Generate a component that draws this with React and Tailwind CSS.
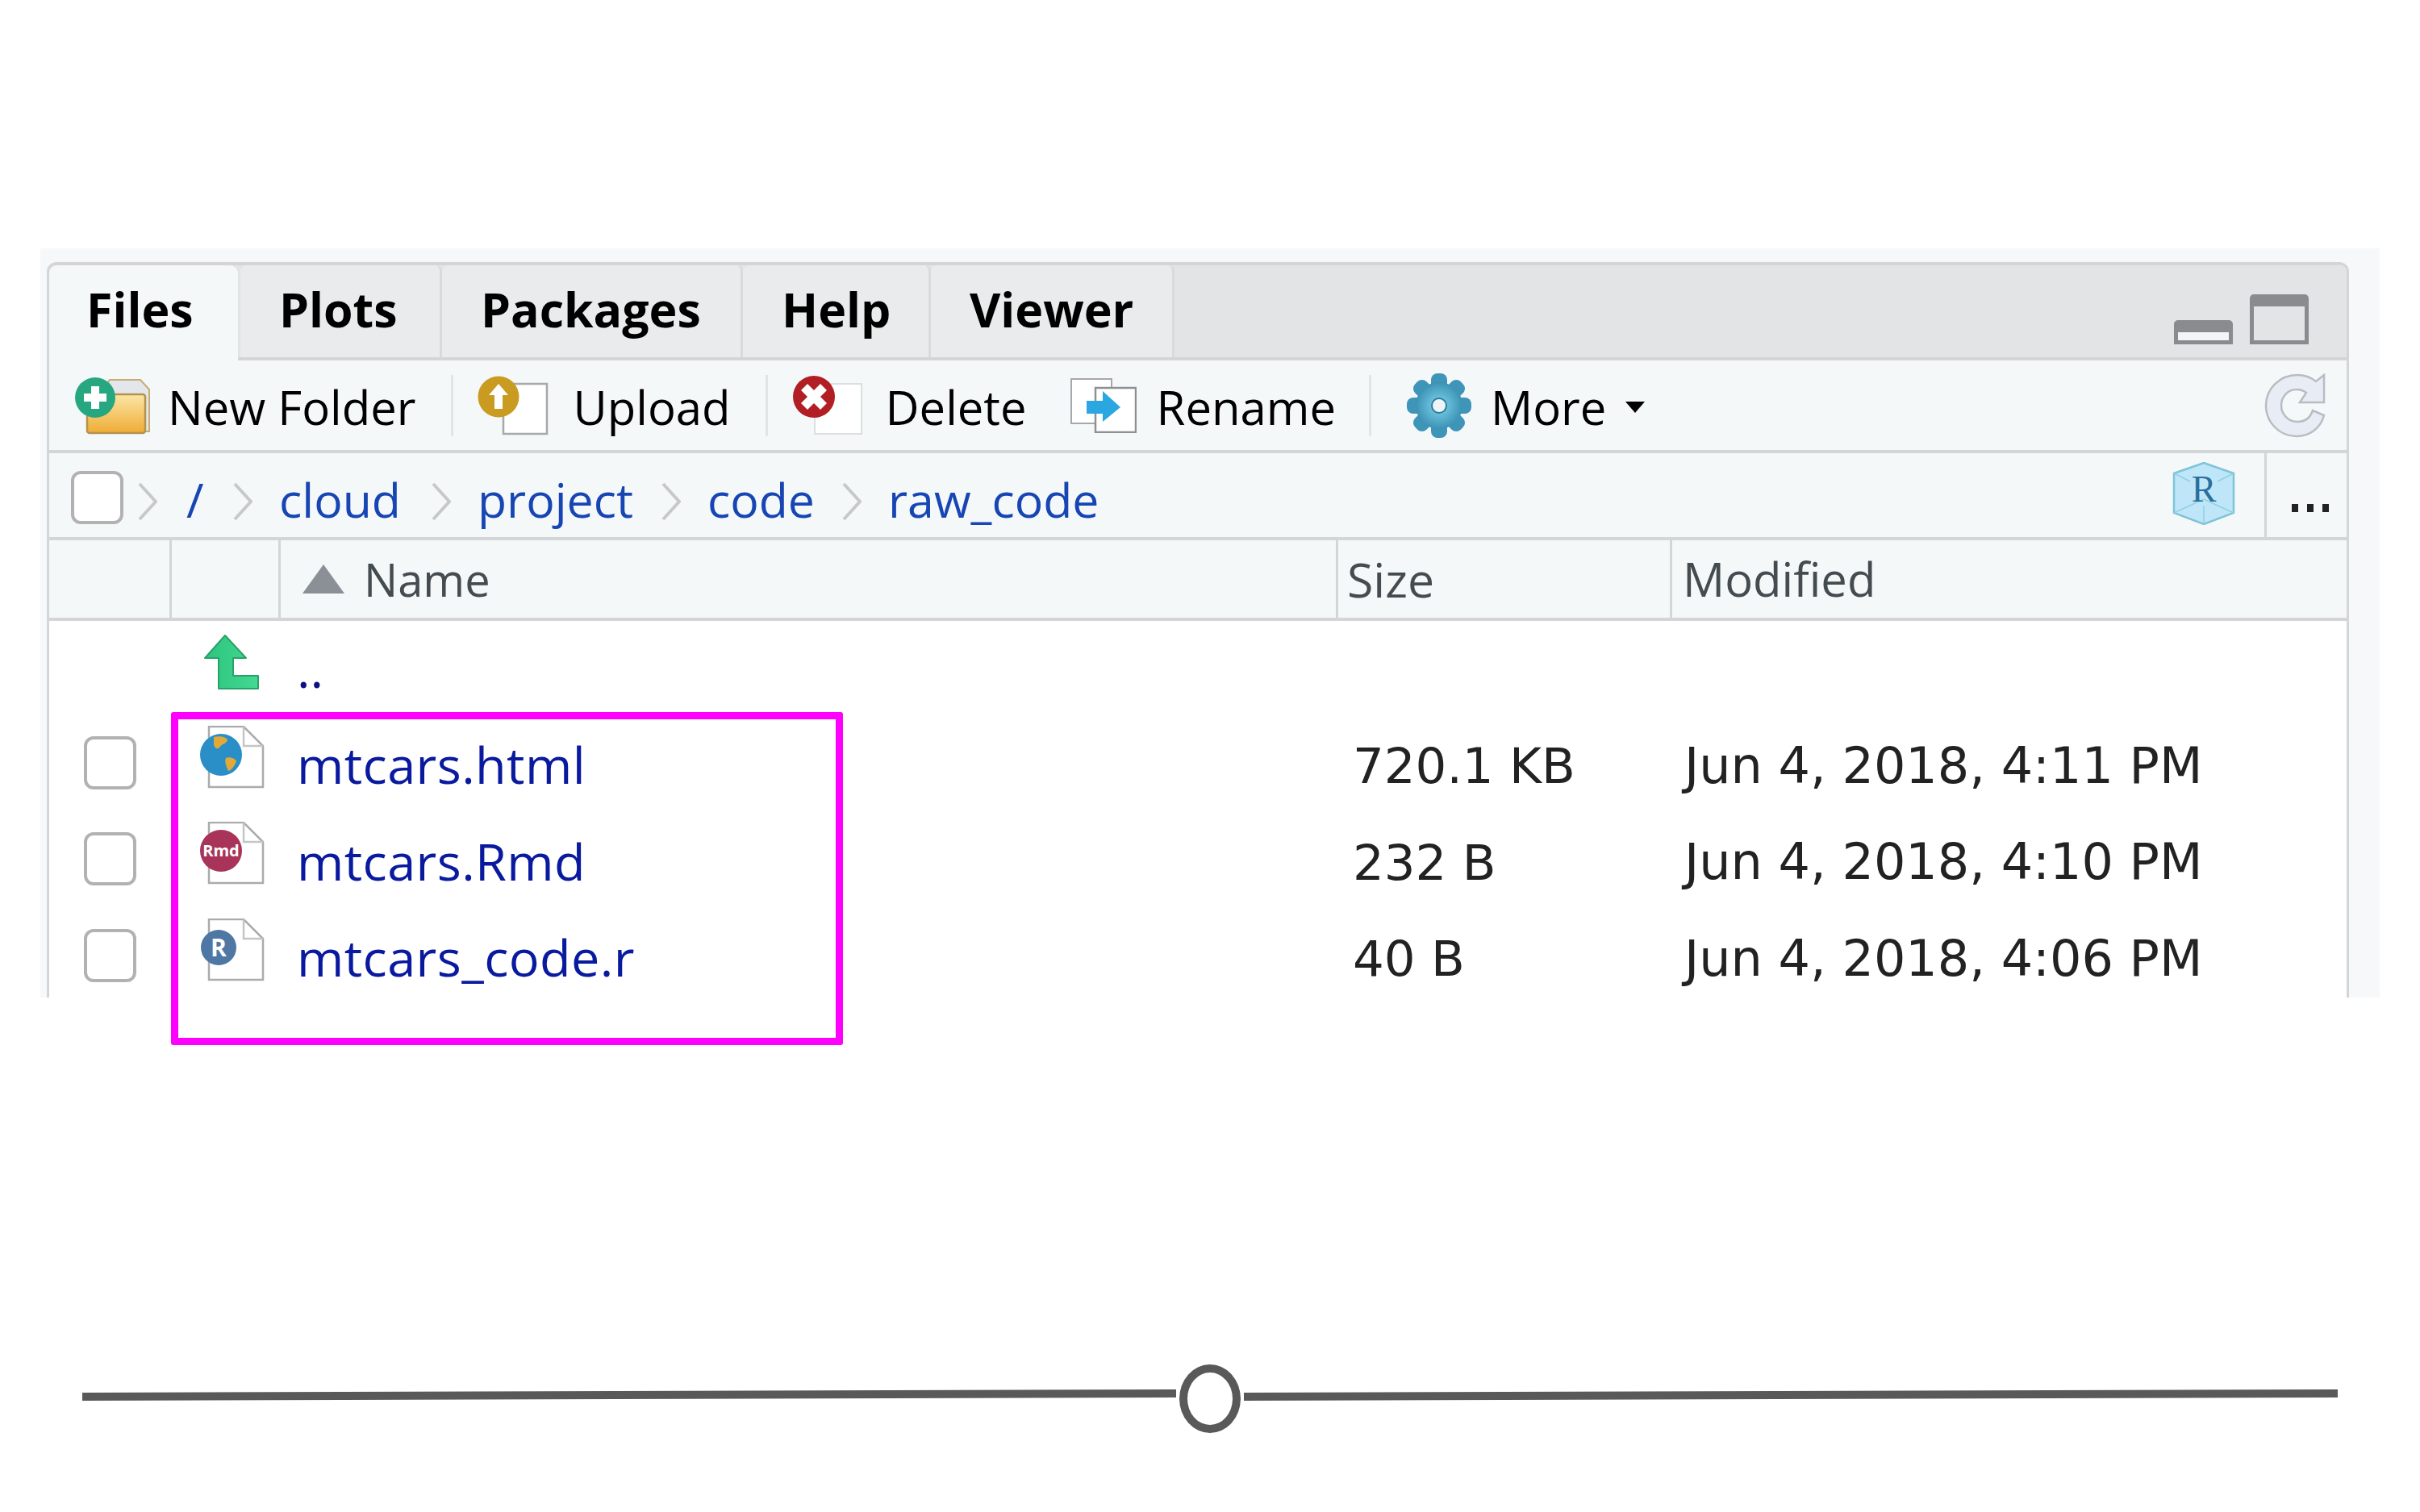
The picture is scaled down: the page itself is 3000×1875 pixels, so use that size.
import React from 'react';

const font = { fontFamily: '"Open Sans", "Liberation Sans", sans-serif' };
const dejavu = { fontFamily: '"DejaVu Sans", sans-serif' };

function NewFolderIcon() {
  return (
    <svg width="100" height="76" viewBox="0 0 100 76" className="shrink-0">
      <defs>
        <linearGradient id="folderFill" x1="0" y1="0" x2="0" y2="1">
          <stop offset="0" stopColor="#fbe6a6" />
          <stop offset="1" stopColor="#efac35" />
        </linearGradient>
      </defs>
      <path d="M30 24 L44 6 H82 L93 18 V70 H86 V24 Z" fill="#e3e7ec" stroke="#c8ab72" strokeWidth="2" />
      <rect x="16" y="24" width="72" height="48" rx="3" fill="url(#folderFill)" stroke="#b4924e" strokeWidth="2.5" />
      <circle cx="26" cy="28" r="25" fill="#27a77f" />
      <path d="M21 14 H31 V23 H40 V33 H31 V42 H21 V33 H12 V23 H21 Z" fill="#fff" />
    </svg>
  );
}

function UploadIcon() {
  return (
    <svg width="88" height="76" viewBox="0 0 88 76" className="shrink-0">
      <rect x="32" y="11" width="54" height="62" fill="#fff" stroke="#a6a9ab" strokeWidth="2.5" />
      <circle cx="26" cy="27" r="25.5" fill="#c99b20" />
      <path d="M26 11 L38 25 H31 V42 H21 V25 H14 Z" fill="#fff" />
    </svg>
  );
}

function DeleteIcon() {
  return (
    <svg width="88" height="76" viewBox="0 0 88 76" className="shrink-0">
      <rect x="27" y="11" width="58" height="62" fill="#fff" stroke="#dcdedf" strokeWidth="2" />
      <circle cx="26" cy="27" r="26" fill="#b11f24" />
      <path d="M18 11 L26 19 L34 11 L42 19 L34 27 L42 35 L34 43 L26 35 L18 43 L10 35 L18 27 L10 19 Z" fill="#fff" />
    </svg>
  );
}

function RenameIcon() {
  return (
    <svg width="82" height="68" viewBox="0 0 82 68" className="shrink-0">
      <rect x="1" y="1" width="50" height="55" fill="#fff" stroke="#a6a9ab" strokeWidth="2" />
      <rect x="31" y="12" width="50" height="55" fill="#fff" stroke="#8d9194" strokeWidth="2.5" />
      <path d="M20 28 H40 V16 L62 36 L40 54 V44 H20 Z" fill="#2aa7e0" />
    </svg>
  );
}

function GearIcon() {
  const teeth = [0, 45, 90, 135, 180, 225, 270, 315];
  return (
    <svg width="82" height="82" viewBox="0 0 82 82" className="shrink-0">
      <defs>
        <radialGradient id="gearFill">
          <stop offset="0" stopColor="#7fd6ee" />
          <stop offset="1" stopColor="#3c92b4" />
        </radialGradient>
      </defs>
      <g fill="url(#gearFill)">
        {teeth.map((a) => (
          <rect key={a} x="31" y="1" width="20" height="24" rx="8" fill="#3f95b8" transform={`rotate(${a} 41 41)`} />
        ))}
        <circle cx="41" cy="41" r="29" />
      </g>
      <circle cx="41" cy="41" r="9" fill="#eef5f7" stroke="#2f7d9d" strokeWidth="2" />
    </svg>
  );
}

function RefreshIcon() {
  return (
    <svg width="76" height="80" viewBox="0 0 76 80" className="shrink-0">
      <path
        d="M41 2 C50 2 58 5 64 10 L74 2 V36 H44 L52 24 C48 21 44 20 40 20 C29 20 21 29 21 40 C21 51 30 60 41 60 C50 60 57 55 60 46 L74 52 C70 68 56 78 40 78 C18 78 2 60 2 40 C2 19 19 2 41 2 Z"
        fill="#e8edf5"
        stroke="#b9bdc3"
        strokeWidth="2.5"
      />
    </svg>
  );
}

function CubeIcon() {
  return (
    <svg width="78" height="78" viewBox="0 0 78 78" className="shrink-0">
      <path d="M39 1 L76 14 V63 L39 77 L2 63 V14 Z" fill="#bfe6f8" stroke="#7ec4d8" strokeWidth="2.5" />
      <path d="M2 14 L22 24 M76 14 L56 24 M39 77 V54 M2 63 L39 46 L76 63" fill="none" stroke="#8fd0e2" strokeWidth="1.5" />
      <text x="39" y="49" textAnchor="middle" fontSize="46" fill="#2a6f9c" style={{ fontFamily: '"Liberation Serif", serif' }}>R</text>
    </svg>
  );
}

function UpArrowIcon() {
  return (
    <svg width="70" height="70" viewBox="0 0 70 70">
      <defs>
        <linearGradient id="arrowFill" x1="0" y1="0" x2="1" y2="0">
          <stop offset="0" stopColor="#2cc47e" />
          <stop offset="1" stopColor="#45d992" />
        </linearGradient>
      </defs>
      <path d="M27 2 L53 30 H37 V52 H68 V68 H19 V30 H2 Z" fill="url(#arrowFill)" stroke="#27a368" strokeWidth="2" strokeLinejoin="round" />
    </svg>
  );
}

function CrumbChevron() {
  return (
    <svg width="24" height="48" viewBox="0 0 24 48" className="shrink-0 mt-[15px]">
      <path d="M2 2 L22 24 L2 46" fill="none" stroke="#c6c8ca" strokeWidth="4" />
    </svg>
  );
}

function FileIcon({ children }) {
  return (
    <svg width="80" height="78" viewBox="0 0 80 78">
      <path d="M11 1 H54 L78 25 V76 H11 Z" fill="#fff" stroke="#a9abad" strokeWidth="2.5" />
      <path d="M54 1 V25 H78" fill="none" stroke="#c3c5c6" strokeWidth="2.5" />
      {children}
    </svg>
  );
}

function GlobeBadge() {
  return (
    <g>
      <circle cx="26" cy="36" r="26" fill="#2a8fc6" />
      <path d="M17 14 C24 12 34 14 34 18 C32 23 27 22 24 27 C21 30 18 27 17 24 Z" fill="#e2a93a" />
      <path d="M32 40 C37 38 44 41 45 44 C43 50 38 56 35 56 C33 51 30 45 32 40 Z" fill="#e2a93a" />
    </g>
  );
}

function RmdBadge() {
  return (
    <g>
      <circle cx="26" cy="36" r="26" fill="#a8345a" />
      <text x="26" y="43" textAnchor="middle" fontSize="20" fontWeight="700" fill="#fff" style={font}>Rmd</text>
    </g>
  );
}

function RBadge() {
  return (
    <g>
      <circle cx="23" cy="36" r="22" fill="#4f77a4" />
      <text x="23" y="47" textAnchor="middle" fontSize="30" fontWeight="700" fill="#fff" style={font}>R</text>
    </g>
  );
}

function Checkbox({ className }) {
  return <div className={`bg-white border-[4px] border-[#b2b2b2] rounded-[12px] ${className}`} />;
}

function ToolLabel({ className, children }) {
  return <span className={`mt-[4px] ${className}`}>{children}</span>;
}

const tabs = [
  { label: 'Plots', width: 'w-[250px]' },
  { label: 'Packages', width: 'w-[373px]' },
  { label: 'Help', width: 'w-[233px]' },
  { label: 'Viewer', width: 'w-[302px]' },
];

const crumbs = [
  { label: '/', className: 'w-[58px] ml-[36px]' },
  { label: 'cloud', className: 'w-[189px] ml-[33px]' },
  { label: 'project', className: 'w-[228px] ml-[33px]' },
  { label: 'code', className: 'w-[167px] ml-[33px]' },
  { label: 'raw_code', className: 'w-auto ml-[33px]' },
];

const files = [
  { name: 'mtcars.html', size: '720.1 KB', date: 'Jun 4, 2018, 4:11 PM', badge: <GlobeBadge /> },
  { name: 'mtcars.Rmd', size: '232 B', date: 'Jun 4, 2018, 4:10 PM', badge: <RmdBadge /> },
  { name: 'mtcars_code.r', size: '40 B', date: 'Jun 4, 2018, 4:06 PM', badge: <RBadge /> },
];

function ToolSeparator() {
  return <div className="w-[3px] h-[76px] bg-[#e2e5e6] shrink-0" />;
}

function FilesPanel() {
  return (
    <div className="h-[912px] w-[2854px] ml-[8px] mt-[17px] border-x-[3px] border-t-[4px] border-[#d3d6d7] rounded-t-[12px] overflow-hidden bg-white">
      {/* tab strip */}
      <div className="h-[118px] bg-[#e3e4e5] border-b-[4px] border-[#d3d6d7] flex items-end relative">
        <div className="w-[234px] h-[118px] -mb-[4px] bg-[#f5f8f9] rounded-t-[10px] pl-[46px] pt-[16px] font-bold text-[59px] leading-[76px] text-black">Files</div>
        <div className="w-[3px]" />
        {tabs.map((tab) => (
          <div key={tab.label} className={`${tab.width} h-[114px] bg-[#eaebec] border-r-[3px] border-[#d8dadb] rounded-t-[8px] pl-[48px] pt-[16px] font-bold text-[59px] leading-[76px] text-black`}>
            {tab.label}
          </div>
        ))}
        <div className="ml-auto mr-[47px] mb-[16px] flex items-end gap-[21px]">
          <div className="w-[73px] h-[30px] border-[5px] border-t-[15px] border-[#888c8e] rounded-t-[5px] bg-[#f3f4f5]" />
          <div className="w-[73px] h-[62px] border-[5px] border-t-[15px] border-[#888c8e] rounded-t-[5px] bg-[#e3e4e5]" />
        </div>
      </div>

      {/* toolbar */}
      <div className="h-[115px] bg-[#f5f8f9] border-b-[4px] border-[#d3d6d7] flex items-center text-[58px] leading-none text-black">
        <div className="ml-[31px]"><NewFolderIcon /></div>
        <ToolLabel className="ml-[16px]">New Folder</ToolLabel>
        <div className="ml-[44px]"><ToolSeparator /></div>
        <div className="ml-[30px]"><UploadIcon /></div>
        <ToolLabel className="ml-[30px]">Upload</ToolLabel>
        <div className="ml-[43px]"><ToolSeparator /></div>
        <div className="ml-[31px]"><DeleteIcon /></div>
        <ToolLabel className="ml-[27px]">Delete</ToolLabel>
        <div className="ml-[54px]"><RenameIcon /></div>
        <ToolLabel className="ml-[25px]">Rename</ToolLabel>
        <div className="ml-[41px]"><ToolSeparator /></div>
        <div className="ml-[43px]"><GearIcon /></div>
        <ToolLabel className="ml-[23px]">More</ToolLabel>
        <div className="ml-[24px] mt-[4px] w-0 h-0 border-x-[12px] border-x-transparent border-t-[14px] border-t-black" />
        <div className="ml-auto mr-[26px]"><RefreshIcon /></div>
      </div>

      {/* path bar */}
      <div className="h-[108px] bg-[#f5f8f9] border-b-[4px] border-[#d3d6d7] flex items-center text-[59px] leading-none text-[#1746b4]">
        <Checkbox className="ml-[27px] mt-[6px] w-[65px] h-[66px] shrink-0" />
        <div className="w-[18px]" />
        {crumbs.map((crumb) => (
          <div key={crumb.label} className="flex items-center">
            <CrumbChevron />
            <span className={`${crumb.className} mt-[10px]`}>{crumb.label}</span>
          </div>
        ))}
        <div className="ml-auto -mt-[4px]"><CubeIcon /></div>
        <div className="ml-[36px] w-[3px] self-stretch bg-[#d3d6d7]" />
        <div className="ml-[31px] mr-[22px] w-[46px] mt-[32px] flex justify-between">
          <div className="w-[8px] h-[10px] bg-[#222]" />
          <div className="w-[8px] h-[10px] bg-[#222]" />
          <div className="w-[8px] h-[10px] bg-[#222]" />
        </div>
      </div>

      {/* table */}
      <div className="h-[100px] bg-[#f5f8f9] border-b-[4px] border-[#d3d6d7] grid grid-cols-[152px_135px_1311px_414px_1fr] leading-none text-[#444c50]">
        <div className="border-r-[3px] border-[#d3d6d7]" />
        <div className="border-r-[3px] border-[#d3d6d7]" />
        <div className="border-r-[3px] border-[#d3d6d7] flex items-center pl-[27px] text-[56px]">
          <div className="w-0 h-0 border-x-[26px] border-x-transparent border-b-[36px] border-b-[#8a9096]" />
          <span className="ml-[24px]">Name</span>
        </div>
        <div className="border-r-[3px] border-[#d3d6d7] flex items-center pl-[11px] text-[59px]">Size</div>
        <div className="flex items-center pl-[13px] text-[58px]">Modified</div>
      </div>
      <div className="grid grid-cols-[152px_135px_1311px_414px_1fr] h-[116px] items-center">
        <div />
        <div className="ml-[39px] -mt-[15px]"><UpArrowIcon /></div>
        <span className="pl-[20px] text-[63px] leading-none text-[#0b1180]">..</span>
      </div>
      {files.map((file) => (
        <div key={file.name} className="grid grid-cols-[152px_135px_1311px_414px_1fr] h-[119.5px] items-center leading-none">
          <Checkbox className="ml-[43px] w-[65px] h-[66px]" />
          <div className="ml-[35px] -mt-[14px]">
            <FileIcon>{file.badge}</FileIcon>
          </div>
          <span className="pl-[20px] mt-[4px] text-[63px] tracking-[0.4px] text-[#0a1a9f]">{file.name}</span>
          <span className="pl-[18px] mt-[8px] text-[61px] text-[#222]" style={dejavu}>{file.size}</span>
          <span className="pl-[15px] mt-[8px] text-[62px] text-[#222] whitespace-nowrap" style={dejavu}>{file.date}</span>
        </div>
      ))}
    </div>
  );
}

function SliderRow() {
  return (
    <div className="mt-[455px] ml-[102px] w-[2795px] flex items-center">
      <div className="flex-1 h-[10px] bg-[#595959] -translate-y-[5px] -rotate-[0.17deg]" />
      <div className="w-[76px] h-[85px] mx-[4px] rounded-[50%] border-[10px] border-[#595959] shrink-0" />
      <div className="flex-1 h-[10px] bg-[#595959] -translate-y-[5px] -rotate-[0.17deg]" />
    </div>
  );
}

export default function App() {
  return (
    <div className="w-[3000px] h-[1875px] bg-white overflow-hidden relative pt-[308px]" style={font}>
      <div className="ml-[50px] w-[2900px] h-[929px] bg-[#f6f8f9] overflow-hidden">
        <FilesPanel />
      </div>
      <SliderRow />
      {/* highlight box drawn over the file list */}
      <div className="absolute left-[212px] top-[883px] w-[833px] h-[413px] border-[9px] border-[#ff00ff] rounded-[3px] pointer-events-none" />
    </div>
  );
}
